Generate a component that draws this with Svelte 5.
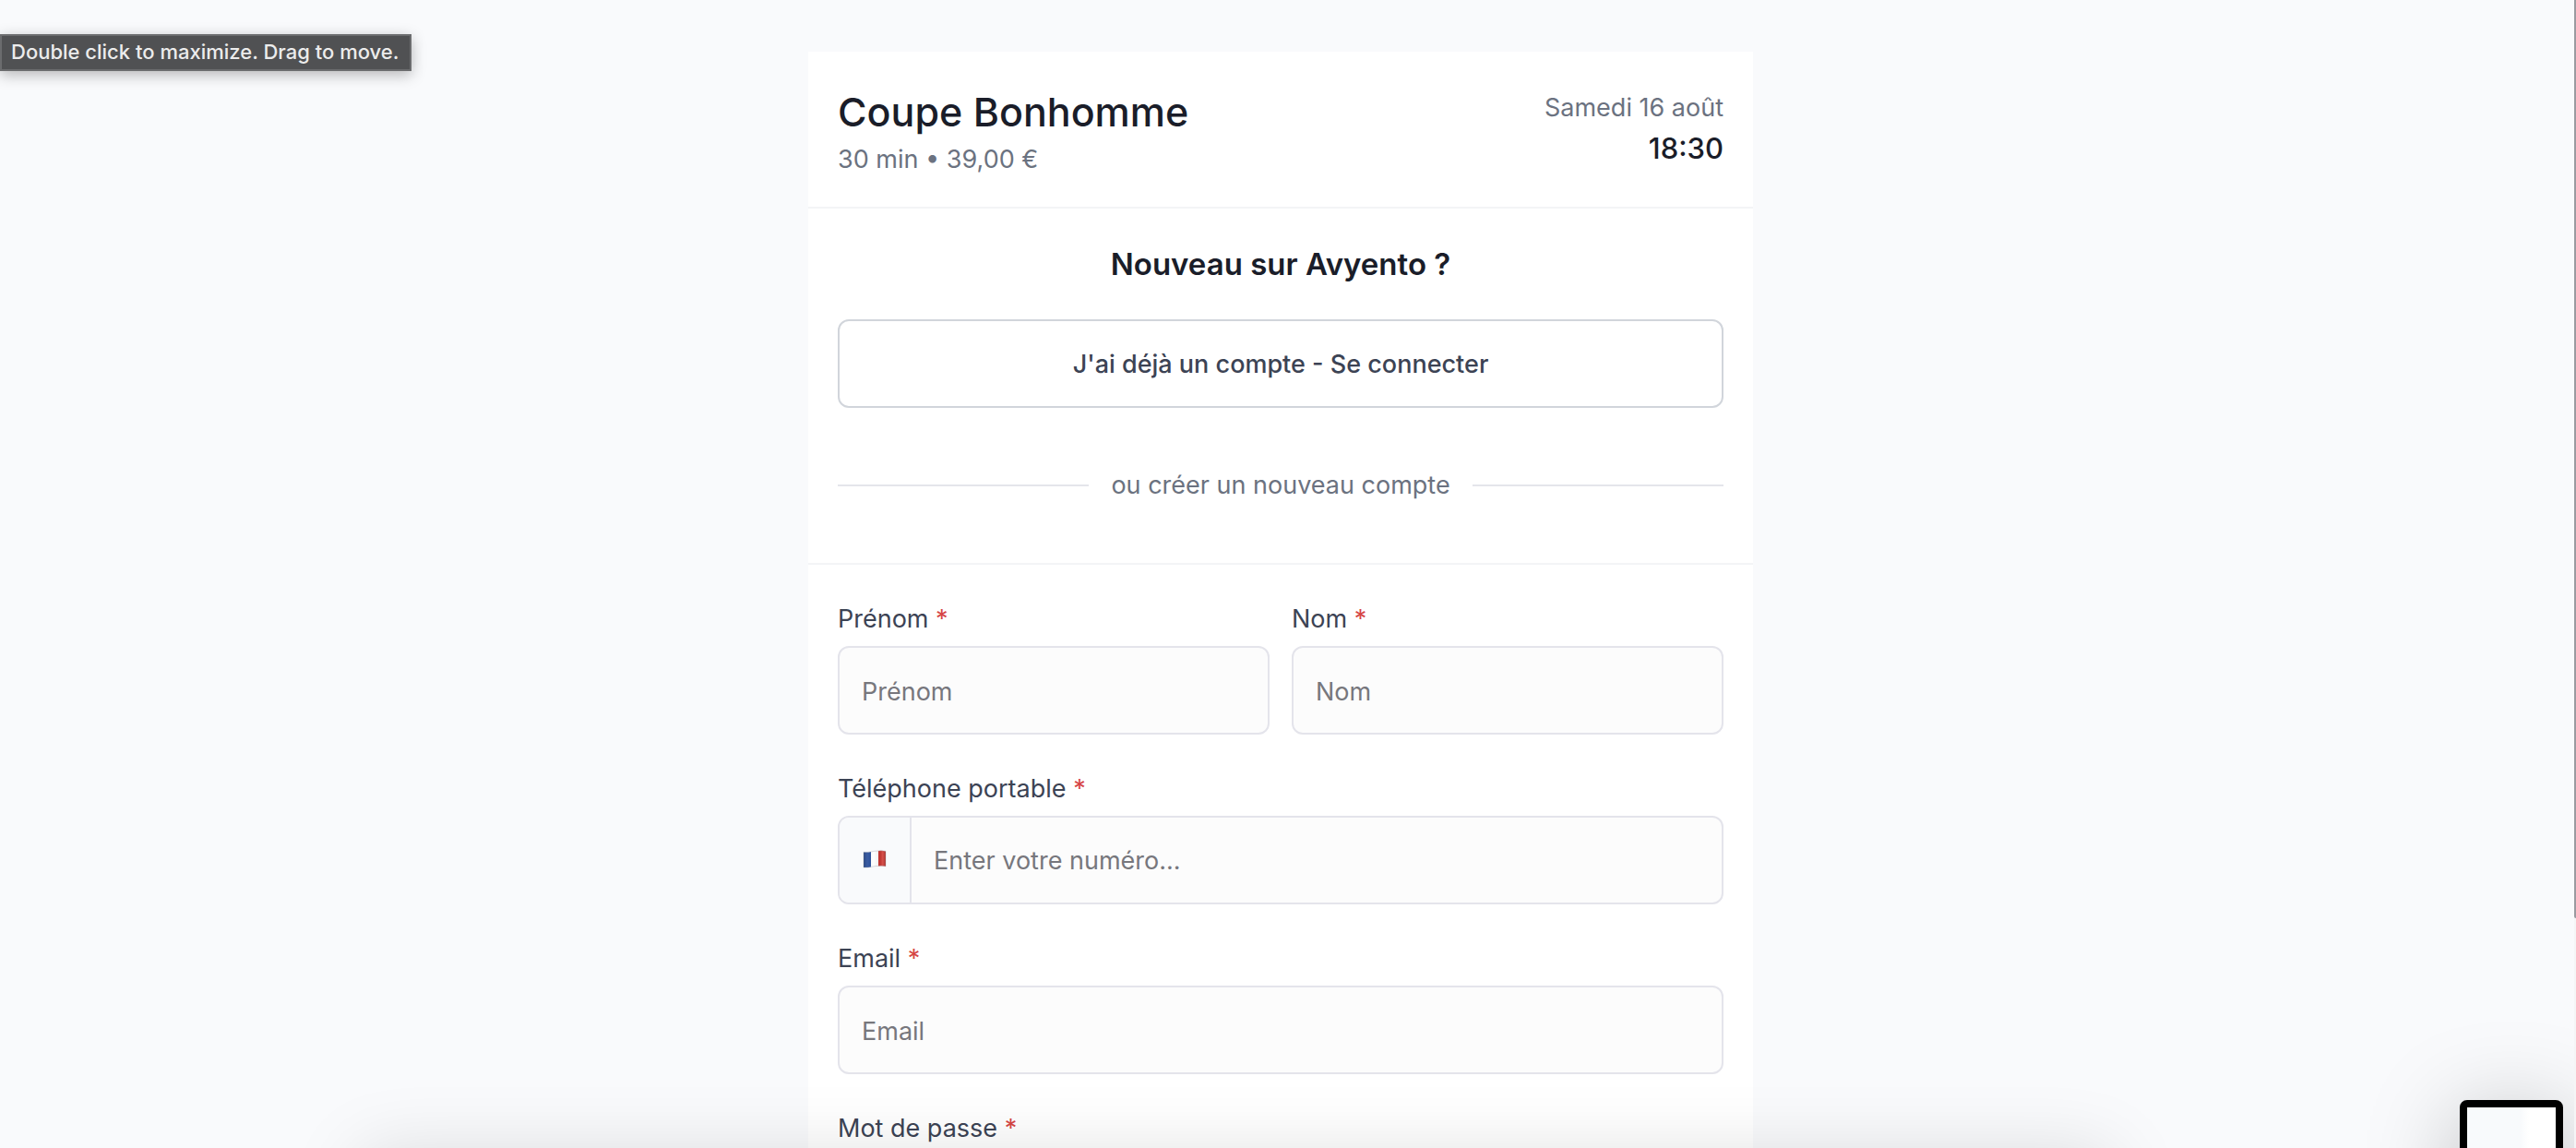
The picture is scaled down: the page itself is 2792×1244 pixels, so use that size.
<script>
  let firstName = $state('');
  let lastName = $state('');
  let phone = $state('');
  let email = $state('');
  let password = $state('');
</script>

{#snippet required()}<span class="required" aria-hidden="true">*</span>{/snippet}

<div class="page">
  <main class="card">
    <header class="summary">
      <div>
        <h1>Coupe Bonhomme</h1>
        <p class="muted">30 min • 39,00 €</p>
      </div>
      <div class="slot">
        <p class="muted">Samedi 16 août</p>
        <p class="time">18:30</p>
      </div>
    </header>

    <section class="account">
      <h2>Nouveau sur Avyento ?</h2>
      <button class="login" type="button">J'ai déjà un compte - Se connecter</button>
      <div class="divider"><span>ou créer un nouveau compte</span></div>
    </section>

    <form class="signup">
      <div class="pair">
        <div class="field">
          <label for="first-name">Prénom {@render required()}</label>
          <input id="first-name" class="box" type="text" placeholder="Prénom" bind:value={firstName} />
        </div>
        <div class="field">
          <label for="last-name">Nom {@render required()}</label>
          <input id="last-name" class="box" type="text" placeholder="Nom" bind:value={lastName} />
        </div>
      </div>
      <div class="field">
        <label for="phone">Téléphone portable {@render required()}</label>
        <div class="phone">
          <span class="country">
            <svg viewBox="0 0 26 20" width="26" height="20" role="img" aria-label="France">
              <defs>
                <linearGradient id="wave" x1="0" x2="1" y1="0" y2="0">
                  <stop offset="0" stop-color="#000" stop-opacity=".2" />
                  <stop offset=".2" stop-color="#fff" stop-opacity=".06" />
                  <stop offset=".45" stop-color="#000" stop-opacity="0" />
                  <stop offset=".75" stop-color="#000" stop-opacity=".08" />
                  <stop offset=".85" stop-color="#fff" stop-opacity=".1" />
                  <stop offset="1" stop-color="#000" stop-opacity=".2" />
                </linearGradient>
              </defs>
              <path d="M1 2.4Q5 2.8 9 2V18.4Q5 19.3 1 19Z" fill="#2b509c" />
              <path d="M9 2Q13 1 17 1V17.4Q13 17.5 9 18.4Z" fill="#fff" />
              <path d="M17 1Q21 .4 25 1.4V17.8Q21 16.8 17 17.4Z" fill="#d03a35" />
              <path d="M1 2.4Q5 2.8 9 2Q13 1 17 1Q21 .4 25 1.4V17.8Q21 16.8 17 17.4Q13 17.5 9 18.4Q5 19.3 1 19Z" fill="url(#wave)" stroke="#9a9da5" stroke-opacity=".6" stroke-width=".6" />
            </svg>
          </span>
          <input id="phone" type="tel" placeholder="Enter votre numéro..." bind:value={phone} />
        </div>
      </div>
      <div class="field">
        <label for="email">Email {@render required()}</label>
        <input id="email" class="box" type="email" placeholder="Email" bind:value={email} />
      </div>
      <div class="field">
        <label for="password">Mot de passe {@render required()}</label>
        <input id="password" class="box" type="password" placeholder="Mot de passe" bind:value={password} />
      </div>
    </form>
  </main>

  <div class="tooltip" role="tooltip">Double click to maximize. Drag to move.</div>
  <div class="dock-shadow"></div>
  <div class="preview"></div>
  <div class="scroll"><div class="thumb"></div></div>
</div>

<style>
  :global(body) {
    background: #f9fafc;
  }

  .page {
    position: relative;
    box-sizing: border-box;
    height: 100vh;
    overflow: hidden;
    padding: 56px 16px 0 0;
    background: #f9fafc;
    color: #1a1d29;
    font-family: Inter, "Liberation Sans", sans-serif;
    font-size: 27px;
    line-height: 40px;
  }

  h1,
  h2,
  p {
    margin: 0;
  }

  .card {
    max-width: 1024px;
    margin: 0 auto;
    background: #fff;
  }

  .summary {
    display: flex;
    align-items: center;
    justify-content: space-between;
    padding: 33px 32px 31px;
    border-bottom: 2px solid #f3f4f6;
  }

  h1 {
    font-size: 43px;
    font-weight: 500;
    line-height: 64px;
  }

  .muted {
    color: #6b7280;
  }

  .slot {
    text-align: right;
  }

  .time {
    font-size: 31px;
    font-weight: 500;
    line-height: 48px;
  }

  .account {
    display: flex;
    flex-direction: column;
    padding: 40px 32px 64px;
    border-bottom: 2px solid #f3f4f6;
  }

  h2 {
    margin-bottom: 40px;
    font-size: 33px;
    font-weight: 600;
    line-height: 40px;
    text-align: center;
  }

  .login {
    height: 96px;
    margin-bottom: 64px;
    border: 2px solid #d1d5db;
    border-radius: 12px;
    padding: 2px 24px 0;
    background: #fff;
    color: #3c4354;
    font: inherit;
    font-weight: 500;
    cursor: pointer;
  }

  .divider {
    display: flex;
    align-items: center;
    gap: 24px;
    color: #6b7280;
  }

  .divider::before,
  .divider::after {
    content: "";
    flex: 1;
    height: 2px;
    background: #e4e5eb;
  }

  .signup {
    display: flex;
    flex-direction: column;
    gap: 40px;
    padding: 40px 32px;
  }

  .pair {
    display: grid;
    grid-template-columns: 1fr 1fr;
    gap: 24px;
  }

  .field {
    display: flex;
    flex-direction: column;
    gap: 10px;
    min-width: 0;
  }

  label {
    color: #3c4354;
    line-height: 38px;
  }

  .required {
    color: #d64545;
  }

  input {
    box-sizing: border-box;
    min-width: 0;
    padding: 2px 24px 0;
    border: 0;
    outline: 0;
    background: transparent;
    color: #1a1d29;
    font: inherit;
  }

  input::placeholder {
    color: #77777d;
    opacity: 1;
  }

  .box,
  .phone {
    box-sizing: border-box;
    height: 96px;
    border: 2px solid #e4e4eb;
    border-radius: 12px;
    background: #fcfcfc;
  }

  .phone {
    display: flex;
    overflow: hidden;
  }

  .phone input {
    flex: 1;
  }

  .country {
    display: flex;
    align-items: center;
    padding: 0 25px 2px;
    border-right: 2px solid #e4e4eb;
    background: #f9fafc;
  }

  .tooltip {
    position: absolute;
    top: 37px;
    left: 0;
    border: 2px solid #6b6c6e;
    padding: 0 12px 2px 10px;
    background: #505153;
    box-shadow: 0 4px 16px rgb(0 0 0 / 28%);
    color: #ececec;
    font-size: 22px;
    font-weight: 500;
    line-height: 34px;
    white-space: nowrap;
  }

  .dock-shadow {
    position: absolute;
    top: 100%;
    right: 18%;
    left: 14%;
    height: 160px;
    box-shadow: 0 6px 80px rgb(0 0 0 / 13%);
  }

  .preview {
    position: absolute;
    top: calc(100% - 52px);
    right: 14px;
    box-sizing: border-box;
    width: 112px;
    height: 200px;
    border: 8px solid #000;
    border-radius: 8px;
    background: linear-gradient(90deg, #f8fafc 60%, #fff 70%);
    box-shadow: 0 16px 100px rgb(0 0 0 / 26%);
  }

  .scroll {
    position: absolute;
    inset: 0 0 0 auto;
    width: 2px;
    background: #f5f5f6;
  }

  .thumb {
    height: 80%;
    border-radius: 0 0 0 2px;
    background: #9a9aa0;
  }
</style>
